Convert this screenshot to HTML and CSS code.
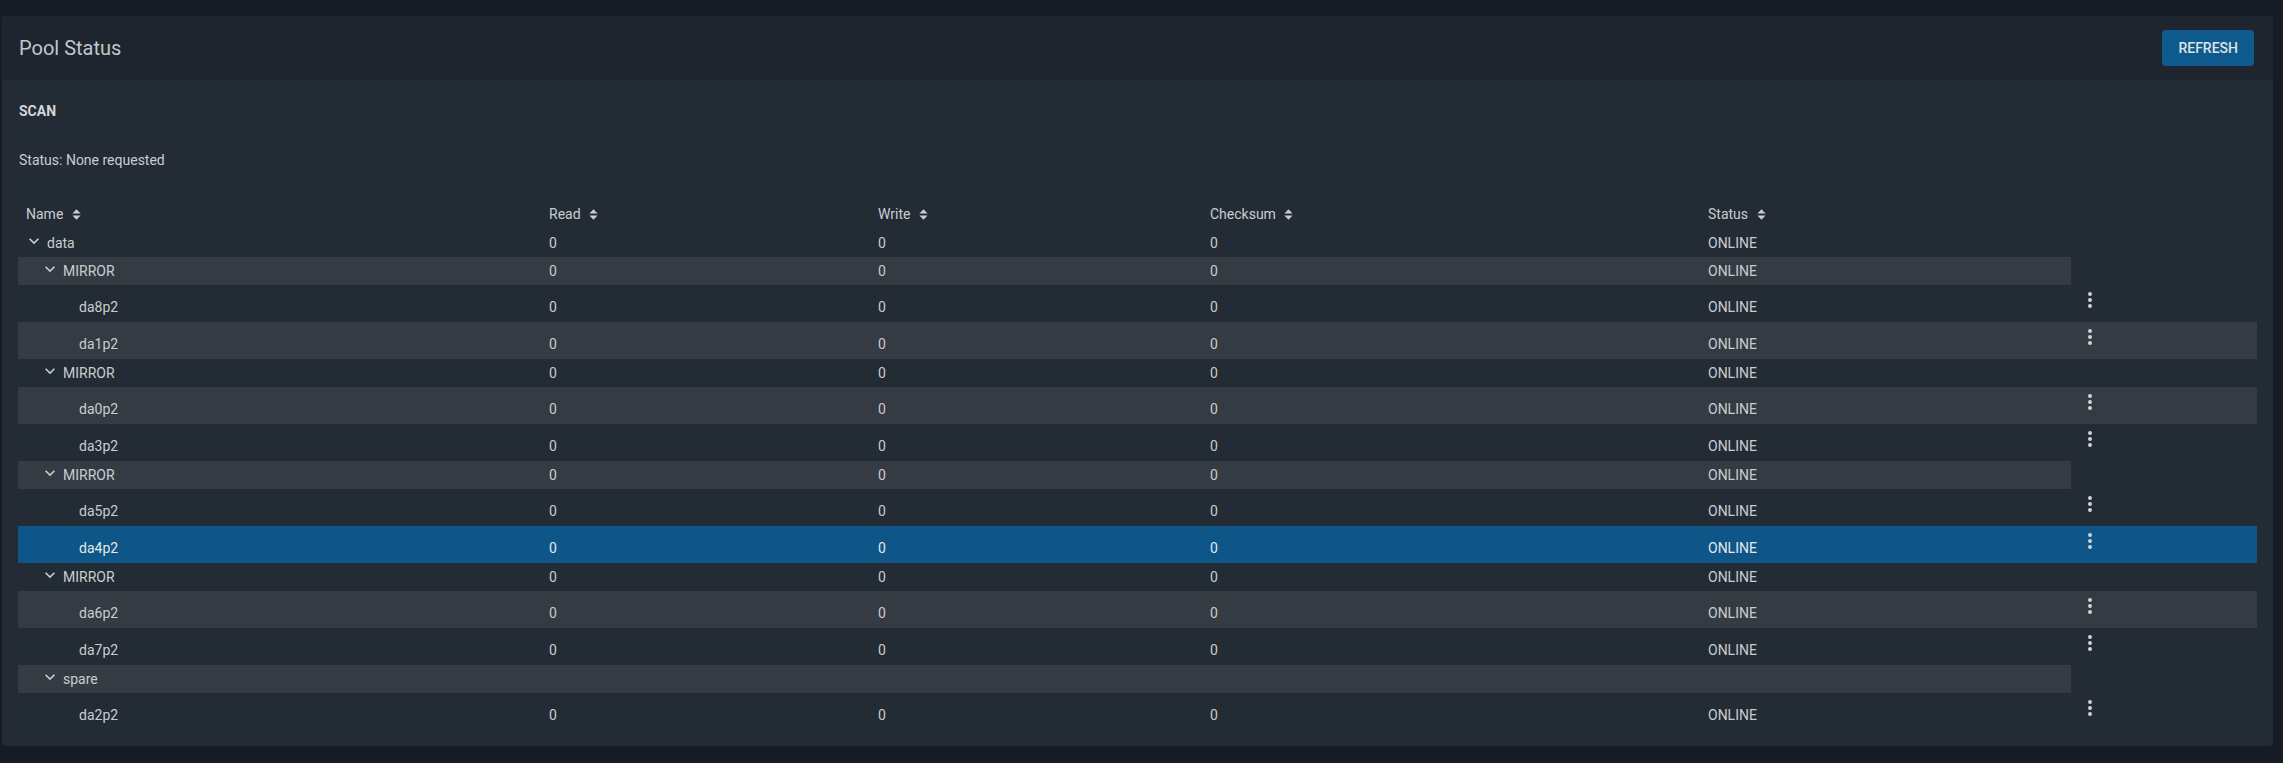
FILE: index.html
```html
<!DOCTYPE html>
<html lang="en">
<head>
  <meta charset="UTF-8">
  <title>Pool Status</title>
  <link rel="stylesheet" href="styles.css">
</head>
<body>

  <div class="page">
    <div class="card">
      <div class="card-header">
        <h2 class="card-title">Pool Status</h2>
        <button type="button" class="btn-refresh">REFRESH</button>
      </div>

      <div class="card-body">
        <h4 class="scan-title">SCAN</h4>
        <p class="scan-status">Status: None requested</p>

        <!-- Tree table -->
        <div class="tree-table">
          <div class="row head">
            <div class="cell">Name <svg class="sort" viewBox="0 0 9 11"><path d="M4.5 0.3 L8.6 4.6 H0.4 Z M0.4 6.4 H8.6 L4.5 10.7 Z"/></svg></div>
            <div class="cell">Read <svg class="sort" viewBox="0 0 9 11"><path d="M4.5 0.3 L8.6 4.6 H0.4 Z M0.4 6.4 H8.6 L4.5 10.7 Z"/></svg></div>
            <div class="cell">Write <svg class="sort" viewBox="0 0 9 11"><path d="M4.5 0.3 L8.6 4.6 H0.4 Z M0.4 6.4 H8.6 L4.5 10.7 Z"/></svg></div>
            <div class="cell">Checksum <svg class="sort" viewBox="0 0 9 11"><path d="M4.5 0.3 L8.6 4.6 H0.4 Z M0.4 6.4 H8.6 L4.5 10.7 Z"/></svg></div>
            <div class="cell">Status <svg class="sort" viewBox="0 0 9 11"><path d="M4.5 0.3 L8.6 4.6 H0.4 Z M0.4 6.4 H8.6 L4.5 10.7 Z"/></svg></div>
            <div class="cell"></div>
          </div>

          <div class="row group lvl0">
            <div class="cell name"><svg class="toggle" viewBox="0 0 24 24"><path d="M7.41,8.58L12,13.17L16.59,8.58L18,10L12,16L6,10L7.41,8.58Z"/></svg>data</div>
            <div class="cell">0</div><div class="cell">0</div><div class="cell">0</div><div class="cell">ONLINE</div>
          </div>

          <div class="row group lvl1 striped">
            <div class="cell name"><svg class="toggle" viewBox="0 0 24 24"><path d="M7.41,8.58L12,13.17L16.59,8.58L18,10L12,16L6,10L7.41,8.58Z"/></svg>MIRROR</div>
            <div class="cell">0</div><div class="cell">0</div><div class="cell">0</div><div class="cell">ONLINE</div>
          </div>
          <div class="row leaf">
            <div class="cell name">da8p2</div>
            <div class="cell">0</div><div class="cell">0</div><div class="cell">0</div><div class="cell">ONLINE</div>
            <div class="cell actions"><svg class="dots" viewBox="0 0 24 24"><path d="M12,16A2,2 0 0,1 14,18A2,2 0 0,1 12,20A2,2 0 0,1 10,18A2,2 0 0,1 12,16M12,10A2,2 0 0,1 14,12A2,2 0 0,1 12,14A2,2 0 0,1 10,12A2,2 0 0,1 12,10M12,4A2,2 0 0,1 14,6A2,2 0 0,1 12,8A2,2 0 0,1 10,6A2,2 0 0,1 12,4Z"/></svg></div>
          </div>
          <div class="row leaf striped">
            <div class="cell name">da1p2</div>
            <div class="cell">0</div><div class="cell">0</div><div class="cell">0</div><div class="cell">ONLINE</div>
            <div class="cell actions"><svg class="dots" viewBox="0 0 24 24"><path d="M12,16A2,2 0 0,1 14,18A2,2 0 0,1 12,20A2,2 0 0,1 10,18A2,2 0 0,1 12,16M12,10A2,2 0 0,1 14,12A2,2 0 0,1 12,14A2,2 0 0,1 10,12A2,2 0 0,1 12,10M12,4A2,2 0 0,1 14,6A2,2 0 0,1 12,8A2,2 0 0,1 10,6A2,2 0 0,1 12,4Z"/></svg></div>
          </div>

          <div class="row group lvl1">
            <div class="cell name"><svg class="toggle" viewBox="0 0 24 24"><path d="M7.41,8.58L12,13.17L16.59,8.58L18,10L12,16L6,10L7.41,8.58Z"/></svg>MIRROR</div>
            <div class="cell">0</div><div class="cell">0</div><div class="cell">0</div><div class="cell">ONLINE</div>
          </div>
          <div class="row leaf striped">
            <div class="cell name">da0p2</div>
            <div class="cell">0</div><div class="cell">0</div><div class="cell">0</div><div class="cell">ONLINE</div>
            <div class="cell actions"><svg class="dots" viewBox="0 0 24 24"><path d="M12,16A2,2 0 0,1 14,18A2,2 0 0,1 12,20A2,2 0 0,1 10,18A2,2 0 0,1 12,16M12,10A2,2 0 0,1 14,12A2,2 0 0,1 12,14A2,2 0 0,1 10,12A2,2 0 0,1 12,10M12,4A2,2 0 0,1 14,6A2,2 0 0,1 12,8A2,2 0 0,1 10,6A2,2 0 0,1 12,4Z"/></svg></div>
          </div>
          <div class="row leaf">
            <div class="cell name">da3p2</div>
            <div class="cell">0</div><div class="cell">0</div><div class="cell">0</div><div class="cell">ONLINE</div>
            <div class="cell actions"><svg class="dots" viewBox="0 0 24 24"><path d="M12,16A2,2 0 0,1 14,18A2,2 0 0,1 12,20A2,2 0 0,1 10,18A2,2 0 0,1 12,16M12,10A2,2 0 0,1 14,12A2,2 0 0,1 12,14A2,2 0 0,1 10,12A2,2 0 0,1 12,10M12,4A2,2 0 0,1 14,6A2,2 0 0,1 12,8A2,2 0 0,1 10,6A2,2 0 0,1 12,4Z"/></svg></div>
          </div>

          <div class="row group lvl1 striped">
            <div class="cell name"><svg class="toggle" viewBox="0 0 24 24"><path d="M7.41,8.58L12,13.17L16.59,8.58L18,10L12,16L6,10L7.41,8.58Z"/></svg>MIRROR</div>
            <div class="cell">0</div><div class="cell">0</div><div class="cell">0</div><div class="cell">ONLINE</div>
          </div>
          <div class="row leaf">
            <div class="cell name">da5p2</div>
            <div class="cell">0</div><div class="cell">0</div><div class="cell">0</div><div class="cell">ONLINE</div>
            <div class="cell actions"><svg class="dots" viewBox="0 0 24 24"><path d="M12,16A2,2 0 0,1 14,18A2,2 0 0,1 12,20A2,2 0 0,1 10,18A2,2 0 0,1 12,16M12,10A2,2 0 0,1 14,12A2,2 0 0,1 12,14A2,2 0 0,1 10,12A2,2 0 0,1 12,10M12,4A2,2 0 0,1 14,6A2,2 0 0,1 12,8A2,2 0 0,1 10,6A2,2 0 0,1 12,4Z"/></svg></div>
          </div>
          <div class="row leaf selected">
            <div class="cell name">da4p2</div>
            <div class="cell">0</div><div class="cell">0</div><div class="cell">0</div><div class="cell">ONLINE</div>
            <div class="cell actions"><svg class="dots" viewBox="0 0 24 24"><path d="M12,16A2,2 0 0,1 14,18A2,2 0 0,1 12,20A2,2 0 0,1 10,18A2,2 0 0,1 12,16M12,10A2,2 0 0,1 14,12A2,2 0 0,1 12,14A2,2 0 0,1 10,12A2,2 0 0,1 12,10M12,4A2,2 0 0,1 14,6A2,2 0 0,1 12,8A2,2 0 0,1 10,6A2,2 0 0,1 12,4Z"/></svg></div>
          </div>

          <div class="row group lvl1">
            <div class="cell name"><svg class="toggle" viewBox="0 0 24 24"><path d="M7.41,8.58L12,13.17L16.59,8.58L18,10L12,16L6,10L7.41,8.58Z"/></svg>MIRROR</div>
            <div class="cell">0</div><div class="cell">0</div><div class="cell">0</div><div class="cell">ONLINE</div>
          </div>
          <div class="row leaf striped">
            <div class="cell name">da6p2</div>
            <div class="cell">0</div><div class="cell">0</div><div class="cell">0</div><div class="cell">ONLINE</div>
            <div class="cell actions"><svg class="dots" viewBox="0 0 24 24"><path d="M12,16A2,2 0 0,1 14,18A2,2 0 0,1 12,20A2,2 0 0,1 10,18A2,2 0 0,1 12,16M12,10A2,2 0 0,1 14,12A2,2 0 0,1 12,14A2,2 0 0,1 10,12A2,2 0 0,1 12,10M12,4A2,2 0 0,1 14,6A2,2 0 0,1 12,8A2,2 0 0,1 10,6A2,2 0 0,1 12,4Z"/></svg></div>
          </div>
          <div class="row leaf">
            <div class="cell name">da7p2</div>
            <div class="cell">0</div><div class="cell">0</div><div class="cell">0</div><div class="cell">ONLINE</div>
            <div class="cell actions"><svg class="dots" viewBox="0 0 24 24"><path d="M12,16A2,2 0 0,1 14,18A2,2 0 0,1 12,20A2,2 0 0,1 10,18A2,2 0 0,1 12,16M12,10A2,2 0 0,1 14,12A2,2 0 0,1 12,14A2,2 0 0,1 10,12A2,2 0 0,1 12,10M12,4A2,2 0 0,1 14,6A2,2 0 0,1 12,8A2,2 0 0,1 10,6A2,2 0 0,1 12,4Z"/></svg></div>
          </div>

          <div class="row group lvl1 striped">
            <div class="cell name"><svg class="toggle" viewBox="0 0 24 24"><path d="M7.41,8.58L12,13.17L16.59,8.58L18,10L12,16L6,10L7.41,8.58Z"/></svg>spare</div>
            <div class="cell"></div><div class="cell"></div><div class="cell"></div><div class="cell"></div>
          </div>
          <div class="row leaf">
            <div class="cell name">da2p2</div>
            <div class="cell">0</div><div class="cell">0</div><div class="cell">0</div><div class="cell">ONLINE</div>
            <div class="cell actions"><svg class="dots" viewBox="0 0 24 24"><path d="M12,16A2,2 0 0,1 14,18A2,2 0 0,1 12,20A2,2 0 0,1 10,18A2,2 0 0,1 12,16M12,10A2,2 0 0,1 14,12A2,2 0 0,1 12,14A2,2 0 0,1 10,12A2,2 0 0,1 12,10M12,4A2,2 0 0,1 14,6A2,2 0 0,1 12,8A2,2 0 0,1 10,6A2,2 0 0,1 12,4Z"/></svg></div>
          </div>
        </div>
      </div>
    </div>
  </div>

</body>
</html>
```

FILE: styles.css
```css
body {
  margin: 0;
  padding: 0;
  background: #161c24;
  font-family: Roboto, "Liberation Sans", sans-serif;
  font-size: 14px;
  color: #c9cdd2;
}

.page {
  padding: 16px 10px 17px 2px;
}

.card {
  background: #232b34;
  border-radius: 4px;
  overflow: hidden;
}

.card-header {
  height: 64px;
  padding: 0 19px 0 17px;
  background: #1e252e;
  display: flex;
  align-items: center;
  justify-content: space-between;
}

.card-title {
  margin: 0;
  font-size: 20px;
  font-weight: 400;
  color: #c2c7cd;
}

.btn-refresh {
  height: 36px;
  padding: 0 16px;
  font-family: Roboto, sans-serif;
  font-size: 14px;
  font-weight: 500;
  color: #dfe3e8;
  background-color: #0e5a8c;
  border: none;
  border-radius: 4px;
  cursor: pointer;
}

.card-body {
  padding: 16px;
}

.scan-title {
  margin: 5px 0 0 1px;
  font-size: 14px;
  font-weight: 700;
  line-height: 20px;
  color: #d2d6db;
}

.scan-status {
  margin: 29px 0 30px 1px;
  line-height: 20px;
}

/* tree table */
.row {
  display: grid;
  grid-template-columns: 523px 329px 332px 498px 371px 187px;
}

.cell {
  padding-left: 8px;
  white-space: nowrap;
}

.row.head {
  height: 29px;
}

.row.head .cell {
  padding-top: 6px;
  line-height: 16px;
}

.sort {
  width: 9px;
  height: 11px;
  margin-left: 5px;
  vertical-align: -1px;
  fill: #c9cdd2;
}

.row.group {
  grid-template-columns: 523px 329px 332px 498px 371px;
  width: fit-content;
  height: 28px;
  line-height: 28px;
}

.row.leaf {
  height: 37px;
}

.row.leaf .cell {
  padding-top: 14px;
  line-height: 16px;
}

.row.striped {
  background: #353b42;
}

.row.selected {
  background: #0d5687;
  color: #e4e8ec;
}

.row.group .cell.name {
  display: flex;
  align-items: center;
}

.row.lvl0 .cell.name { padding-left: 6px; }
.row.lvl1 .cell.name { padding-left: 22px; }
.row.leaf .cell.name { padding-left: 61px; }

.toggle {
  width: 20px;
  height: 20px;
  margin-right: 3px;
  margin-bottom: 4px;
  fill: #c9cdd2;
}

.row.leaf .cell.actions {
  padding: 3px 0 0 7px;
  line-height: 0;
}

.dots {
  width: 24px;
  height: 24px;
  fill: #cfd3d8;
  cursor: pointer;
}
```
